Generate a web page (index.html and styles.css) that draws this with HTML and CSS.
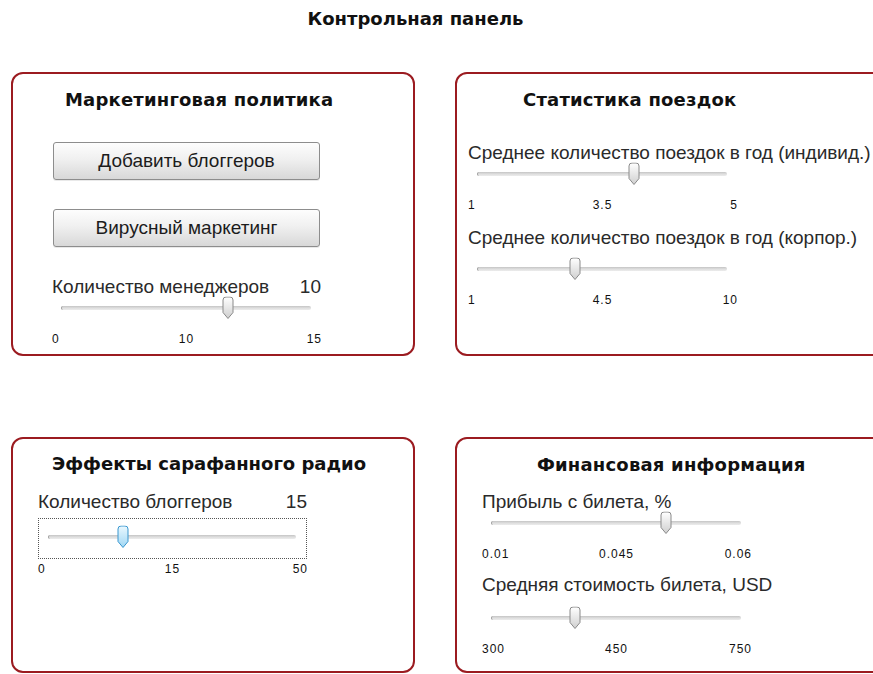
FILE: index.html
```html
<!DOCTYPE html>
<html lang="ru">
<head>
<meta charset="utf-8">
<title>Контрольная панель</title>
<link rel="stylesheet" href="styles.css">
</head>
<body>
<svg class="defs" aria-hidden="true">
  <defs>
    <linearGradient id="knob-gray" x1="0" y1="0" x2="0" y2="1">
      <stop offset="0" stop-color="#ffffff"/>
      <stop offset="1" stop-color="#cfcfcf"/>
    </linearGradient>
    <linearGradient id="knob-blue" x1="0" y1="0" x2="0" y2="1">
      <stop offset="0" stop-color="#eaf8ff"/>
      <stop offset="1" stop-color="#9fd7f4"/>
    </linearGradient>
  </defs>
</svg>

<h1 class="page-title">Контрольная панель</h1>

<main class="board">
  <section class="panel panel--marketing">
    <h2 class="panel-title panel-title--marketing">Маркетинговая политика</h2>
    <button class="btn btn--first" type="button">Добавить блоггеров</button>
    <button class="btn btn--second" type="button">Вирусный маркетинг</button>
    <div class="field-label field-label--managers"><span>Количество менеджеров</span><span>10</span></div>
    <div class="slider slider--tight">
      <div class="track">
        <span class="thumb" style="left:66.667%"><svg viewBox="0 0 13 23" width="13" height="23"><path class="knob" d="M1.5 3.5Q1.5 0.5 4.5 0.5H8.5Q11.5 0.5 11.5 3.5V16L6.5 22L1.5 16Z"/></svg></span>
      </div>
    </div>
    <div class="ticks"><span>0</span><span>10</span><span>15</span></div>
  </section>

  <section class="panel panel--trips">
    <h2 class="panel-title panel-title--trips">Статистика поездок</h2>
    <div class="field-label field-label--trips-a"><span>Среднее количество поездок в год (индивид.)</span></div>
    <div class="slider slider--tight">
      <div class="track">
        <span class="thumb" style="left:62.5%"><svg viewBox="0 0 13 23" width="13" height="23"><path class="knob" d="M1.5 3.5Q1.5 0.5 4.5 0.5H8.5Q11.5 0.5 11.5 3.5V16L6.5 22L1.5 16Z"/></svg></span>
      </div>
    </div>
    <div class="ticks"><span>1</span><span>3.5</span><span>5</span></div>
    <div class="field-label field-label--trips-b"><span>Среднее количество поездок в год (корпор.)</span></div>
    <div class="slider slider--loose">
      <div class="track">
        <span class="thumb" style="left:38.889%"><svg viewBox="0 0 13 23" width="13" height="23"><path class="knob" d="M1.5 3.5Q1.5 0.5 4.5 0.5H8.5Q11.5 0.5 11.5 3.5V16L6.5 22L1.5 16Z"/></svg></span>
      </div>
    </div>
    <div class="ticks"><span>1</span><span>4.5</span><span>10</span></div>
  </section>

  <section class="panel panel--radio">
    <h2 class="panel-title panel-title--radio">Эффекты сарафанного радио</h2>
    <div class="field-label field-label--bloggers"><span>Количество блоггеров</span><span>15</span></div>
    <div class="slider slider--focus">
      <div class="track">
        <span class="thumb thumb--active" style="left:30%"><svg viewBox="0 0 13 23" width="13" height="23"><path class="knob" d="M1.5 3.5Q1.5 0.5 4.5 0.5H8.5Q11.5 0.5 11.5 3.5V16L6.5 22L1.5 16Z"/></svg></span>
      </div>
    </div>
    <div class="ticks ticks--close"><span>0</span><span>15</span><span>50</span></div>
  </section>

  <section class="panel panel--finance">
    <h2 class="panel-title panel-title--finance">Финансовая информация</h2>
    <div class="field-label field-label--profit"><span>Прибыль с билета, %</span></div>
    <div class="slider slider--tight">
      <div class="track">
        <span class="thumb" style="left:70%"><svg viewBox="0 0 13 23" width="13" height="23"><path class="knob" d="M1.5 3.5Q1.5 0.5 4.5 0.5H8.5Q11.5 0.5 11.5 3.5V16L6.5 22L1.5 16Z"/></svg></span>
      </div>
    </div>
    <div class="ticks"><span>0.01</span><span>0.045</span><span>0.06</span></div>
    <div class="field-label field-label--price"><span>Средняя стоимость билета, USD</span></div>
    <div class="slider slider--price">
      <div class="track">
        <span class="thumb" style="left:33.333%"><svg viewBox="0 0 13 23" width="13" height="23"><path class="knob" d="M1.5 3.5Q1.5 0.5 4.5 0.5H8.5Q11.5 0.5 11.5 3.5V16L6.5 22L1.5 16Z"/></svg></span>
      </div>
    </div>
    <div class="ticks"><span>300</span><span>450</span><span>750</span></div>
  </section>
</main>
</body>
</html>
```

FILE: styles.css
```css
html, body {
  margin: 0;
  padding: 0;
  background: #ffffff;
  overflow: hidden;
}

body {
  font-family: "Liberation Sans", Arial, sans-serif;
  color: #222222;
}

.defs {
  position: absolute;
  width: 0;
  height: 0;
  overflow: hidden;
}

/* ---------- headings ---------- */

.page-title {
  width: 831px;
  margin: 8px 0 0;
  text-align: center;
  font-family: "DejaVu Sans", Verdana, sans-serif;
  font-weight: bold;
  font-size: 18px;
  line-height: 22px;
  color: #111111;
}

.panel-title {
  margin: 15px 0 0;
  font-family: "DejaVu Sans", Verdana, sans-serif;
  font-weight: bold;
  font-size: 18px;
  line-height: 22px;
  letter-spacing: 0.2px;
  color: #111111;
  white-space: nowrap;
}

.panel-title--marketing { padding-left: 13px; }
.panel-title--trips     { padding-left: 55px; }
.panel-title--radio     { padding-left: 14px; margin-top: 14px; letter-spacing: 0; }
.panel-title--finance   { padding-left: 55px; }

/* ---------- board ---------- */

.board {
  display: grid;
  grid-template-columns: 404px 460px;
  grid-template-rows: 284px 236px;
  column-gap: 40px;
  row-gap: 81px;
  margin-top: 42px;
  padding-left: 11px;
}

.panel {
  box-sizing: border-box;
  border: 2px solid #9b1b20;
  border-radius: 12px;
  background: #ffffff;
  display: flex;
  flex-direction: column;
  align-items: flex-start;
}

.panel > * {
  width: 269px;
  box-sizing: border-box;
}

.panel--marketing { padding-left: 39px; }
.panel--trips     { padding-left: 11px; }
.panel--radio     { padding-left: 25px; }
.panel--finance   { padding-left: 25px; }

.panel-title { width: auto; }

/* ---------- buttons ---------- */

.btn {
  width: 267px;
  height: 38px;
  margin-left: 1px;
  padding: 0;
  border: 1px solid #8d8d8d;
  border-radius: 3px;
  background: linear-gradient(#fdfdfd, #f0f0f0 45%, #d8d8d8);
  box-shadow: 0 1px 0 #e9e9e9;
  font-family: "Liberation Sans", Arial, sans-serif;
  font-size: 19px;
  color: #1c1c1c;
}

.btn--first  { margin-top: 31px; }
.btn--second { margin-top: 29px; }

/* ---------- slider labels ---------- */

.field-label {
  display: flex;
  justify-content: space-between;
  font-size: 19px;
  line-height: 20px;
  white-space: nowrap;
  color: #2a2a2a;
}

.field-label--managers { margin-top: 30px; }
.field-label--trips-a  { margin-top: 32px; }
.field-label--trips-b  { margin-top: 16px; }
.field-label--bloggers { margin-top: 17px; }
.field-label--profit   { margin-top: 16px; }
.field-label--price    { margin-top: 14px; }

/* ---------- sliders ---------- */

.slider {
  display: flex;
  align-items: center;
  height: 23px;
  padding: 0 10px 0 9px;
}

.slider--tight { margin-top: -1px; }
.slider--loose { margin-top: 9px; }
.slider--price { margin-top: 11px; }

.slider--focus {
  height: auto;
  margin-top: 6px;
  padding: 6px 10px 9px 9px;
  border: 1px dotted #555555;
}

.slider--focus .track { margin: 10px 0; }

.track {
  position: relative;
  flex: 1;
  height: 4px;
  border-radius: 2px;
  border-left: 1px solid #9a9a9a;
  background: linear-gradient(#c4c4c4, #dedede 50%, #ececec);
}

.thumb {
  position: absolute;
  top: 50%;
  width: 13px;
  height: 23px;
  transform: translate(-50%, -50%);
}

.thumb svg {
  display: block;
}

.knob {
  fill: url(#knob-gray);
  stroke: #8a8a8a;
  stroke-width: 1;
}

.thumb--active .knob {
  fill: url(#knob-blue);
  stroke: #3a97cf;
}

/* ---------- tick labels ---------- */

.ticks {
  display: grid;
  grid-template-columns: 1fr auto 1fr;
  margin-top: 14px;
  font-family: "Liberation Sans", Arial, sans-serif;
  font-size: 12px;
  line-height: 13px;
  letter-spacing: 1px;
  color: #111111;
}

.ticks span:first-child { justify-self: start; }
.ticks span:last-child  { justify-self: end; margin-right: -1px; }

.ticks--close { margin-top: 4px; }
```
